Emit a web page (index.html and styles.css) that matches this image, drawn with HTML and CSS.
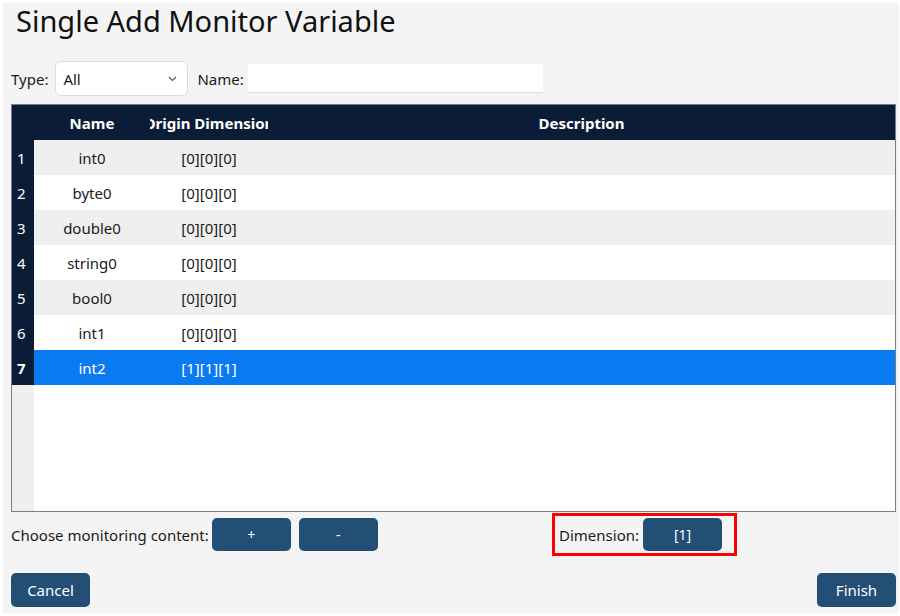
FILE: index.html
```html
<!DOCTYPE html>
<html lang="en">

<head>
    <meta charset="UTF-8">
    <title>Single Add Monitor Variable</title>
    <link rel="stylesheet" href="styles.css">
</head>

<body>
    <div class="window">
        <h1 class="title">Single Add Monitor Variable</h1>

        <div class="filter">
            <label>Type:</label>
            <div class="select">
                <span>All</span>
                <svg width="9" height="6" viewBox="0 0 9 6">
                    <path d="M1 1l3.5 3.5L8 1" fill="none" stroke="#555" stroke-width="1.1" />
                </svg>
            </div>
            <label class="name-label">Name:</label>
            <input class="name-input" type="text" value="" />
        </div>

        <div class="grid">
            <div class="row head">
                <div class="idx"></div>
                <div class="cell">Name</div>
                <div class="cell clip"><span>Origin Dimension</span></div>
                <div class="cell">Description</div>
            </div>
            <div class="row odd">
                <div class="idx">1</div>
                <div class="cell">int0</div>
                <div class="cell">[0][0][0]</div>
                <div class="cell"></div>
            </div>
            <div class="row">
                <div class="idx">2</div>
                <div class="cell">byte0</div>
                <div class="cell">[0][0][0]</div>
                <div class="cell"></div>
            </div>
            <div class="row odd">
                <div class="idx">3</div>
                <div class="cell">double0</div>
                <div class="cell">[0][0][0]</div>
                <div class="cell"></div>
            </div>
            <div class="row">
                <div class="idx">4</div>
                <div class="cell">string0</div>
                <div class="cell">[0][0][0]</div>
                <div class="cell"></div>
            </div>
            <div class="row odd">
                <div class="idx">5</div>
                <div class="cell">bool0</div>
                <div class="cell">[0][0][0]</div>
                <div class="cell"></div>
            </div>
            <div class="row">
                <div class="idx">6</div>
                <div class="cell">int1</div>
                <div class="cell">[0][0][0]</div>
                <div class="cell"></div>
            </div>
            <div class="row selected">
                <div class="idx">7</div>
                <div class="cell">int2</div>
                <div class="cell">[1][1][1]</div>
                <div class="cell"></div>
            </div>
            <div class="filler">
                <div class="idx"></div>
            </div>
        </div>

        <div class="choose">
            <label>Choose monitoring content:</label>
            <button class="btn">+</button>
            <button class="btn">-</button>
            <div class="dimension">
                <label>Dimension:</label>
                <button class="btn">[1]</button>
            </div>
        </div>

        <div class="footer">
            <button class="btn big">Cancel</button>
            <button class="btn big">Finish</button>
        </div>
    </div>
</body>

</html>
```

FILE: styles.css
```css
* {
    margin: 0;
    padding: 0;
    box-sizing: border-box;
}

body {
    background: #fff;
    font-family: "Noto Sans", "Open Sans", sans-serif;
    font-size: 15px;
    color: #1a1a1a;
}

.window {
    margin: 3px 1px 3px 3px;
    height: 610px;
    padding: 0 3px 0 8px;
    background: #f4f4f4;
    display: flex;
    flex-direction: column;
}

.title {
    font-weight: normal;
    font-size: 29px;
    line-height: 36px;
    padding-left: 5px;
    color: #111;
}

.filter {
    display: flex;
    align-items: center;
    height: 35px;
    margin-top: 22px;
}

.select {
    width: 133px;
    height: 35px;
    margin-left: 7px;
    padding: 0 10px 0 7px;
    display: flex;
    align-items: center;
    justify-content: space-between;
    background: #fff;
    border: 1px solid #dcdcdc;
    border-radius: 6px;
}

.name-label {
    margin-left: 9px;
}

.name-input {
    width: 295px;
    height: 29px;
    margin-left: 4px;
    border: none;
    border-bottom: 1px solid #dedede;
    background: #fff;
    outline: none;
}

.grid {
    margin-top: 8px;
    height: 408px;
    border: 1px solid #7d7d7d;
    display: flex;
    flex-direction: column;
    background: #fff;
}

.row {
    display: grid;
    grid-template-columns: 22px 116px 118px 1fr;
    height: 35px;
    align-items: stretch;
}

.row .cell {
    display: flex;
    align-items: center;
    justify-content: center;
    overflow: hidden;
    white-space: nowrap;
}

.idx {
    background: #0b1d36;
    color: #fff;
    display: flex;
    align-items: center;
    padding-left: 5px;
}

.head {
    height: 35px;
    background: #0b1d36;
    color: #fff;
    font-weight: bold;
}

.odd {
    background: #efefef;
}

.selected {
    background: #0a7af0;
    color: #fff;
}

.selected .idx {
    font-weight: bold;
}

.filler {
    flex: 1;
    display: flex;
}

.filler .idx {
    width: 22px;
    background: #efefef;
}

.choose {
    display: flex;
    align-items: center;
    height: 43px;
    margin-top: 1px;
}

.btn {
    width: 79px;
    height: 33px;
    border: none;
    border-radius: 5px;
    background: #234e76;
    color: #fff;
    font-family: inherit;
    font-size: 14px;
}

.choose > label {
    margin-right: 3px;
}

.choose .btn + .btn {
    margin-left: 8px;
}

.dimension {
    margin-left: auto;
    margin-right: 159px;
    height: 43px;
    width: 185px;
    border: 3px solid #f00;
    display: flex;
    align-items: center;
    padding-left: 4px;
}

.dimension .btn {
    margin-left: 4px;
}

.footer {
    display: flex;
    justify-content: space-between;
    margin-top: 17px;
}

.btn.big {
    height: 34px;
    font-size: 15px;
}
```
